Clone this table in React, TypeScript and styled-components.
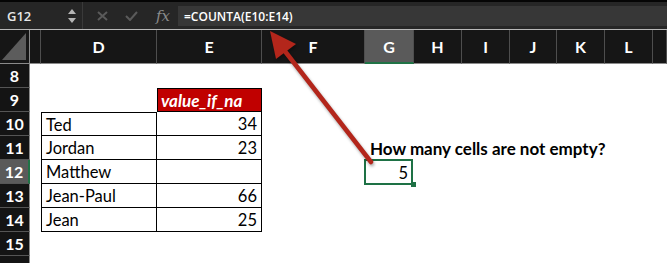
import React from "react";
import styled, { createGlobalStyle, css } from "styled-components";

const GlobalStyle = createGlobalStyle`
  html, body { margin: 0; padding: 0; background: #ffffff; overflow: hidden; }
  * { box-sizing: border-box; }
`;

const Page = styled.div`
  position: relative;
  width: 667px;
  height: 263px;
  overflow: hidden;
  font-family: Lato, "Liberation Sans", sans-serif;
`;

const FormulaBar = styled.div`
  display: flex;
  align-items: stretch;
  height: 30px;
  background: #262626;
  border-top: 2px solid #050505;
  border-bottom: 1px solid #b8b8b8;
`;

const NameBox = styled.div`
  width: 83px;
  display: flex;
  align-items: center;
  justify-content: space-between;
  padding: 0 6px 0 7px;
  color: #e6e6e6;
  font-family: "Open Sans", Lato, sans-serif;
  font-size: 13px;
  font-weight: 600;
  border-right: 1px solid #3a3a3a;
`;

const Spinner = styled.div`
  display: flex;
  flex-direction: column;
  gap: 4px;
`;

const Tri = styled.div<{ $down?: boolean }>`
  width: 0;
  height: 0;
  border-left: 4px solid transparent;
  border-right: 4px solid transparent;
  ${(p) =>
    p.$down
      ? css`border-top: 5px solid #b5b5b5;`
      : css`border-bottom: 5px solid #b5b5b5;`}
`;

const Tools = styled.div`
  width: 95px;
  display: flex;
  align-items: center;
  justify-content: space-between;
  padding: 0 8px 0 14px;
`;

const ToolIcon = styled.span`
  display: flex;
  align-items: center;
`;

const Fx = styled.span`
  font-family: "DejaVu Serif", "Liberation Serif", serif;
  font-style: italic;
  font-size: 15px;
  color: #8a8a8a;
`;

const FormulaInput = styled.div`
  flex: 1;
  margin: 4px 0 3px;
  background: #373737;
  color: #ffffff;
  display: flex;
  align-items: center;
  padding-left: 6px;
  font-family: "Open Sans", Lato, sans-serif;
  font-size: 12px;
  font-weight: 600;
`;

const Sheet = styled.div`
  display: grid;
  grid-template-columns: 30px 11px 116px 105px 103px 49px 48px 48px 47px 48px 48px 1fr;
  grid-template-rows: 34px repeat(9, 24px);
`;

const ColHead = styled.div<{ $active?: boolean }>`
  background: ${(p) => (p.$active ? "#5a5a5a" : "#161616")};
  color: #ffffff;
  font-size: 16px;
  font-weight: 700;
  display: flex;
  align-items: center;
  justify-content: center;
  border-right: 1px solid #4e4e4e;
  border-bottom: ${(p) => (p.$active ? "2px solid #217346" : "1px solid #8a8a8a")};
`;

const Corner = styled.div`
  background: #161616;
  border-right: 1px solid #8a8a8a;
  border-bottom: 1px solid #8a8a8a;
  position: relative;
  &::after {
    content: "";
    position: absolute;
    left: 2px;
    right: 3px;
    top: 3px;
    bottom: 3px;
    background: #5c5c5c;
    clip-path: polygon(100% 0, 100% 100%, 0 100%);
  }
`;

const RowHead = styled.div<{ $active?: boolean }>`
  background: ${(p) => (p.$active ? "#5a5a5a" : "#141414")};
  color: #ffffff;
  font-size: 16px;
  font-weight: 700;
  display: flex;
  align-items: center;
  justify-content: center;
  border-bottom: 1px solid #555;
  border-right: ${(p) => (p.$active ? "2px solid #217346" : "1px solid #8a8a8a")};
`;

const Cell = styled.div<{
  $right?: boolean;
  $box?: boolean;
  $left?: boolean;
  $top?: boolean;
  $red?: boolean;
}>`
  position: relative;
  display: flex;
  align-items: center;
  justify-content: ${(p) => (p.$right ? "flex-end" : "flex-start")};
  padding: 1px 4px 0;
  font-size: 16.5px;
  color: #000;
  white-space: nowrap;
  ${(p) =>
    p.$box &&
    css`
      border-right: 1px solid #000;
      border-bottom: 1px solid #000;
    `}
  ${(p) => p.$left && css`border-left: 1px solid #000;`}
  ${(p) => p.$top && css`border-top: 1px solid #000;`}
  ${(p) =>
    p.$red &&
    css`
      background: #c00000;
      color: #fff;
      font-weight: 700;
      font-style: italic;
      font-size: 17px;
      padding-left: 3px;
    `}
`;

const Question = styled(Cell)`
  font-weight: 700;
  font-size: 17px;
  overflow: visible;
  padding-left: 5px;
  z-index: 1;
`;

const Selected = styled(Cell)`
  padding-right: 6px;
  &::after {
    content: "";
    position: absolute;
    left: -1px;
    right: 1px;
    top: -1px;
    bottom: -1px;
    border: 2px solid #1e7145;
  }
  &::before {
    content: "";
    position: absolute;
    right: -2px;
    bottom: -3px;
    width: 5px;
    height: 5px;
    background: #1e7145;
    z-index: 2;
  }
`;

const Arrow = styled.svg`
  position: absolute;
  left: 0;
  top: 0;
  pointer-events: none;
  filter: drop-shadow(1px 2px 1.5px rgba(0, 0, 0, 0.35));
`;

const cols = ["", "D", "E", "F", "G", "H", "I", "J", "K", "L", ""];

const data: Record<number, { name: string; val: string }> = {
  10: { name: "Ted", val: "34" },
  11: { name: "Jordan", val: "23" },
  12: { name: "Matthew", val: "" },
  13: { name: "Jean-Paul", val: "66" },
  14: { name: "Jean", val: "25" },
};

function renderRow(r: number) {
  const cells: React.ReactNode[] = [];
  cells.push(
    <RowHead key="h" $active={r === 12}>
      {r <= 15 ? r : ""}
    </RowHead>
  );
  cells.push(<Cell key="c" />);
  const d = data[r];
  if (d) {
    cells.push(
      <Cell key="d" $box $left $top={r === 10}>
        {d.name}
      </Cell>
    );
    cells.push(
      <Cell key="e" $box $right>
        {d.val}
      </Cell>
    );
  } else if (r === 9) {
    cells.push(<Cell key="d" />);
    cells.push(
      <Cell key="e" $box $left $top $red>
        value_if_na
      </Cell>
    );
  } else {
    cells.push(<Cell key="d" />);
    cells.push(<Cell key="e" />);
  }
  cells.push(<Cell key="f" />);
  if (r === 11) cells.push(<Question key="g">How many cells are not empty?</Question>);
  else if (r === 12)
    cells.push(
      <Selected key="g" $right>
        5
      </Selected>
    );
  else cells.push(<Cell key="g" />);
  ["h", "i", "j", "k", "l", "m"].forEach((k) => cells.push(<Cell key={k} />));
  return <React.Fragment key={r}>{cells}</React.Fragment>;
}

export default function App() {
  const rows = [8, 9, 10, 11, 12, 13, 14, 15, 16];
  return (
    <>
      <GlobalStyle />
      <Page>
        <FormulaBar>
          <NameBox>
            G12
            <Spinner>
              <Tri />
              <Tri $down />
            </Spinner>
          </NameBox>
          <Tools>
            <ToolIcon>
              <svg width="11" height="10" viewBox="0 0 11 10">
                <path d="M1 1 L10 9 M10 1 L1 9" stroke="#5a5a5a" strokeWidth="2" />
              </svg>
            </ToolIcon>
            <ToolIcon>
              <svg width="13" height="10" viewBox="0 0 13 10">
                <path d="M1 5 L5 9 L12 1" stroke="#5a5a5a" strokeWidth="2" fill="none" />
              </svg>
            </ToolIcon>
            <Fx>fx</Fx>
          </Tools>
          <FormulaInput>=COUNTA(E10:E14)</FormulaInput>
        </FormulaBar>
        <Sheet>
          <Corner />
          {cols.map((c, i) => (
            <ColHead key={i} $active={c === "G"}>
              {c}
            </ColHead>
          ))}
          {rows.map(renderRow)}
        </Sheet>
        <Arrow width="667" height="263" viewBox="0 0 667 263">
          <line x1="371" y1="162" x2="284" y2="50" stroke="#b3261b" strokeWidth="4.5" strokeLinecap="round" />
          <polygon points="270,31 296,44 276,59" fill="#b3261b" />
        </Arrow>
      </Page>
    </>
  );
}
